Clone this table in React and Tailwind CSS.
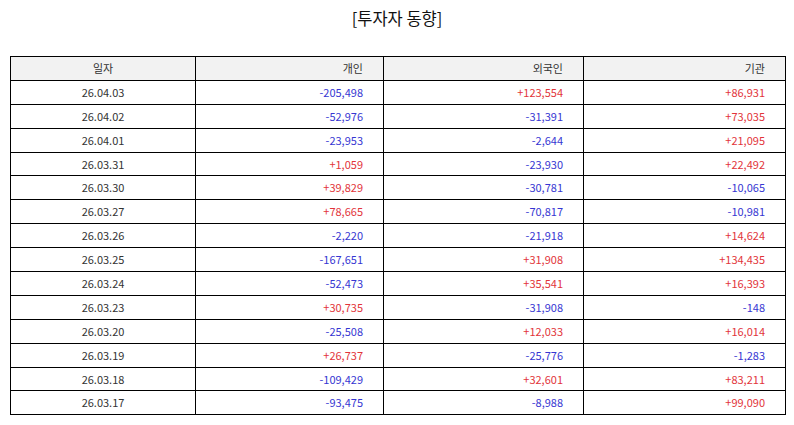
const rows = [
  ['26.04.03', '-205,498', '+123,554', '+86,931'],
  ['26.04.02', '-52,976', '-31,391', '+73,035'],
  ['26.04.01', '-23,953', '-2,644', '+21,095'],
  ['26.03.31', '+1,059', '-23,930', '+22,492'],
  ['26.03.30', '+39,829', '-30,781', '-10,065'],
  ['26.03.27', '+78,665', '-70,817', '-10,981'],
  ['26.03.26', '-2,220', '-21,918', '+14,624'],
  ['26.03.25', '-167,651', '+31,908', '+134,435'],
  ['26.03.24', '-52,473', '+35,541', '+16,393'],
  ['26.03.23', '+30,735', '-31,908', '-148'],
  ['26.03.20', '-25,508', '+12,033', '+16,014'],
  ['26.03.19', '+26,737', '-25,776', '-1,283'],
  ['26.03.18', '-109,429', '+32,601', '+83,211'],
  ['26.03.17', '-93,475', '-8,988', '+99,090'],
];

function Num({ v }) {
  const color = v.startsWith('-') ? 'text-[#3636d2]' : 'text-[#e2343a]';
  return (
    <td className={`border border-black h-[23.9px] pr-5 text-right ${color}`}>{v}</td>
  );
}

export default function App() {
  return (
    <div
      className="w-[794px] h-[425px] bg-white text-[#333] overflow-hidden"
      style={{ fontFamily: '"Noto Sans CJK KR", "Noto Sans", sans-serif' }}
    >
      <h1 className="text-[16.5px] leading-6 text-center text-[#111] pt-[6px] h-[56px]">
        [투자자 동향]
      </h1>
      <table className="ml-[10px] w-[775px] border-collapse text-[11px] leading-none table-fixed">
        <colgroup>
          <col className="w-[185px]" />
          <col className="w-[188px]" />
          <col className="w-[200px]" />
          <col className="w-[202px]" />
        </colgroup>
        <thead>
          <tr className="bg-[#f2f2f2]">
            <th className="border border-black h-[23.9px] font-normal text-center">일자</th>
            <th className="border border-black h-[23.9px] font-normal text-right pr-5">개인</th>
            <th className="border border-black h-[23.9px] font-normal text-right pr-5">외국인</th>
            <th className="border border-black h-[23.9px] font-normal text-right pr-5">기관</th>
          </tr>
        </thead>
        <tbody>
          {rows.map((r) => (
            <tr key={r[0]}>
              <td className="border border-black h-[23.9px] text-center">{r[0]}</td>
              <Num v={r[1]} />
              <Num v={r[2]} />
              <Num v={r[3]} />
            </tr>
          ))}
        </tbody>
      </table>
    </div>
  );
}
